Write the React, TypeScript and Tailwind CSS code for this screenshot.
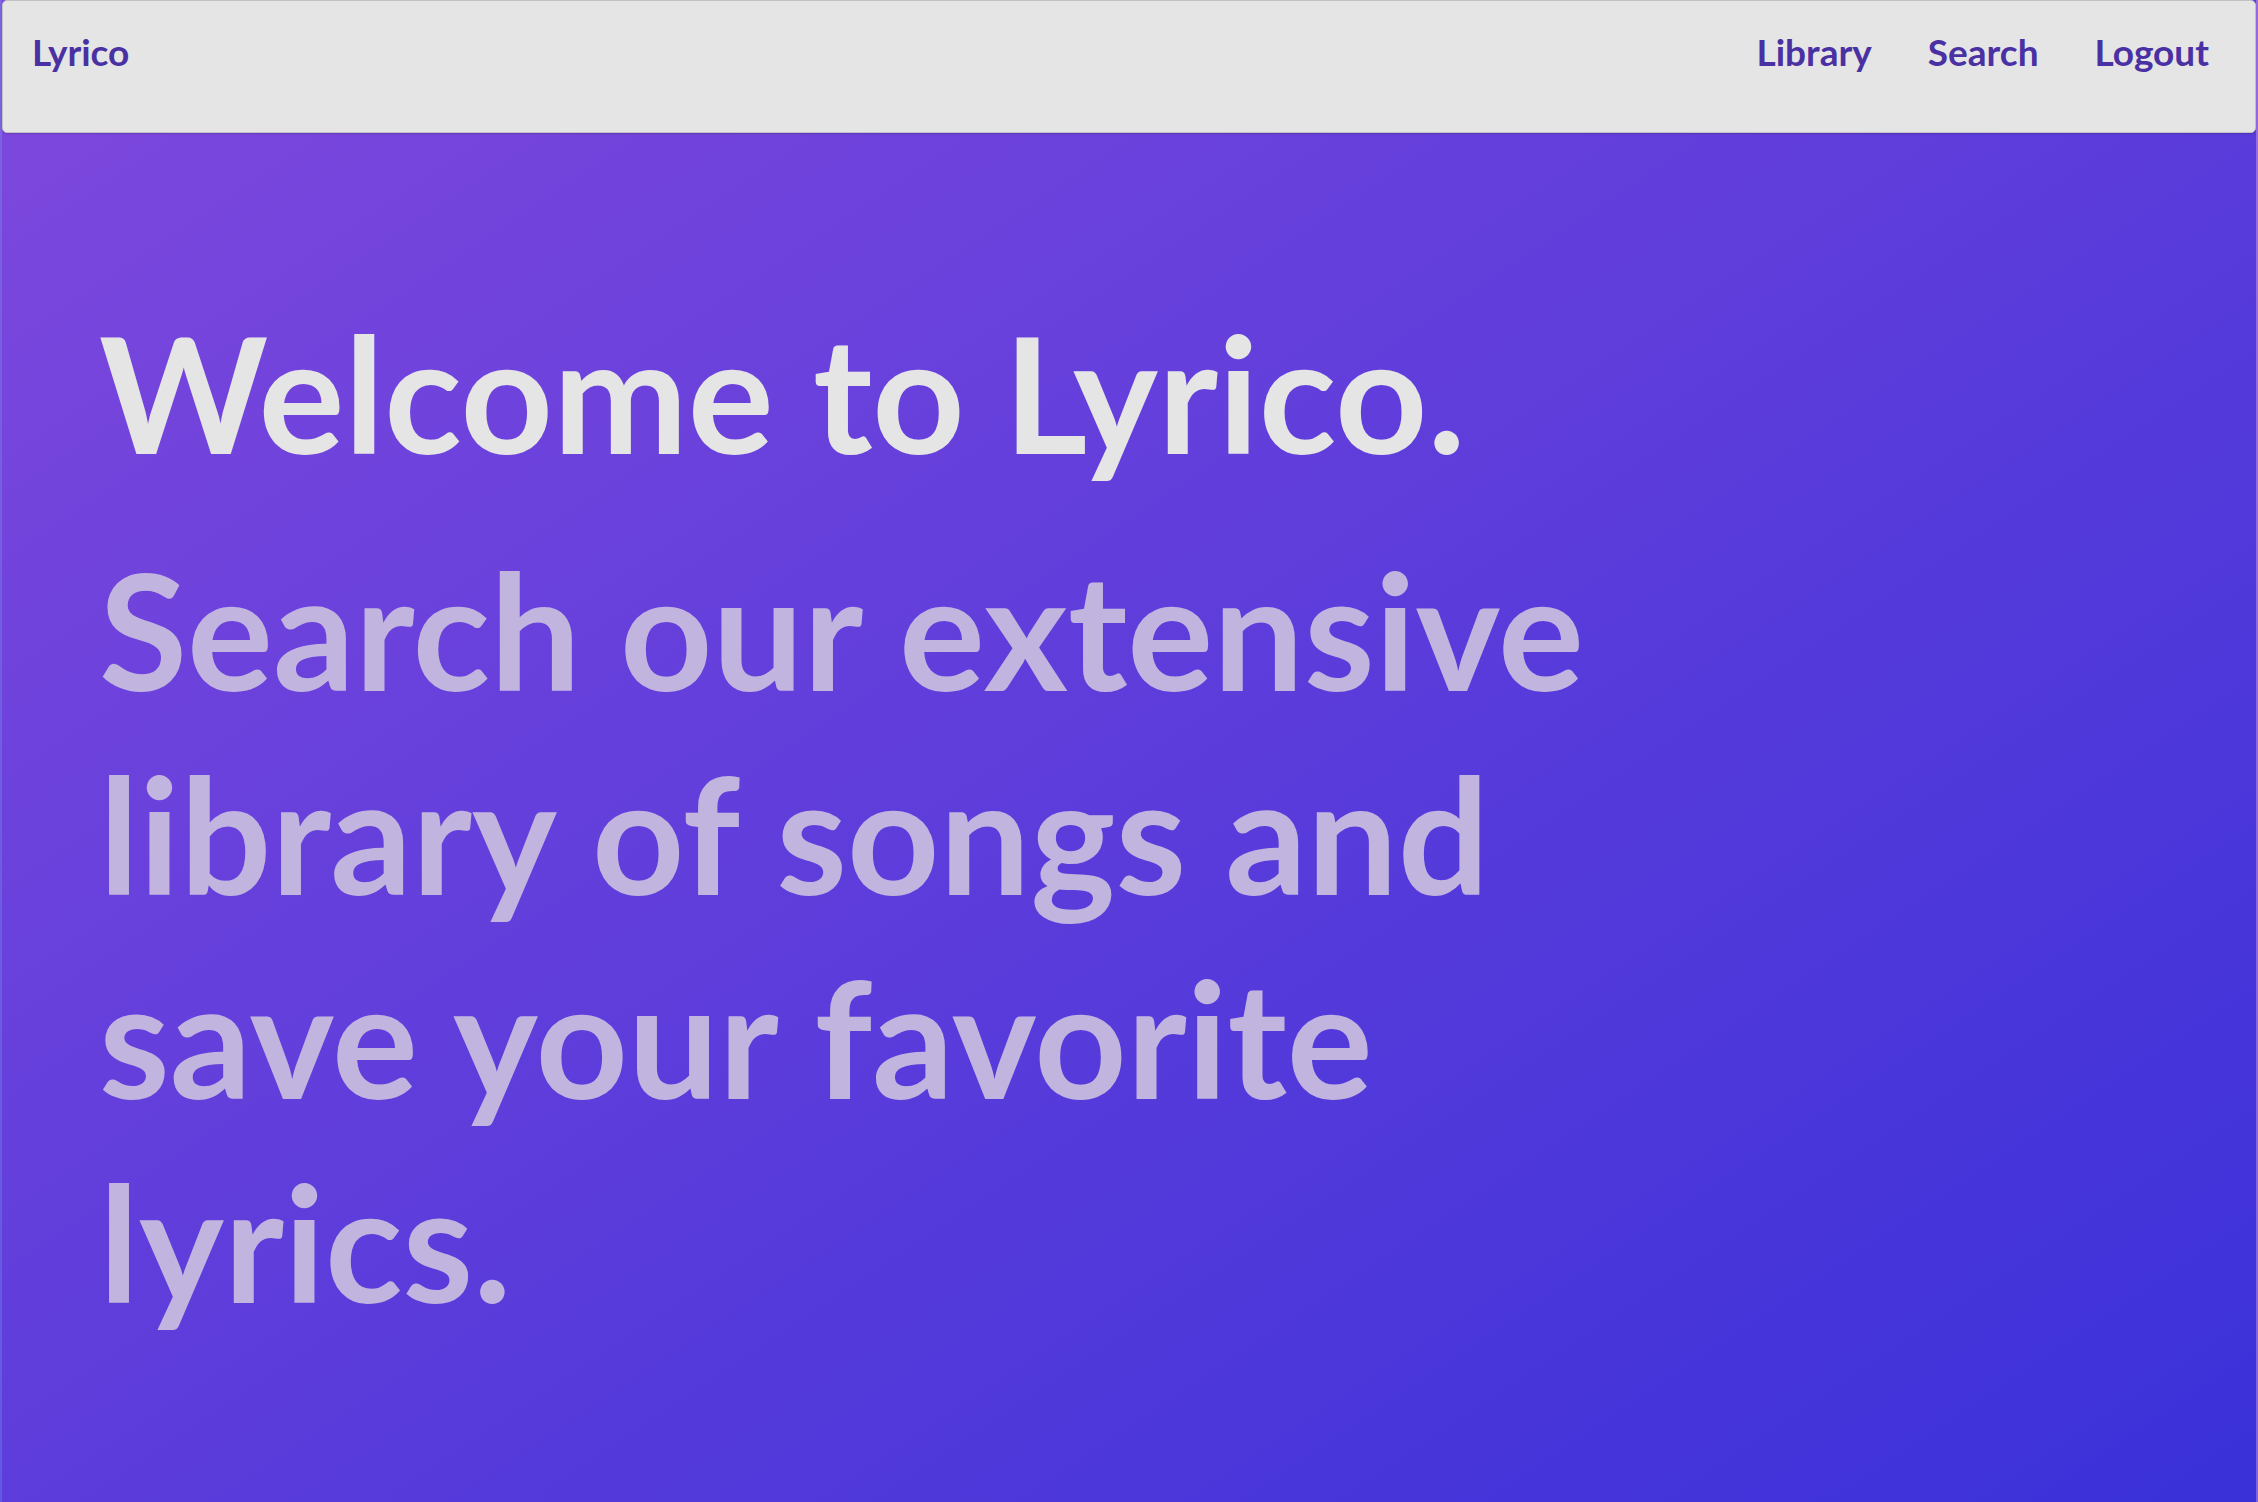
import React from "react";

export default function App() {
  return (
    <div
      className="min-h-[1502px] w-full bg-[linear-gradient(to_bottom_right,#7f48dd,#3a31d9)] border-x-2 border-white/20"
      style={{ fontFamily: "Lato, 'Open Sans', sans-serif" }}
    >
      <header className="h-[133px] bg-[#e5e5e5] border border-[#c2c2c2] rounded-[5px] shadow-[0_1px_2px_rgba(0,0,0,0.15)] flex items-start justify-between pt-[29px] pl-[29px] pr-[46px]">
        <a className="text-[37px] leading-[1.2] font-bold text-[#4a31a3]">Lyrico</a>
        <nav className="flex gap-[56px] text-[37px] leading-[1.2] font-bold text-[#4a31a3]">
          <a>Library</a>
          <a>Search</a>
          <a>Logout</a>
        </nav>
      </header>
      <main className="pl-[97px] pt-[157px] pr-[600px]">
        <h1 className="text-[161px] leading-[204px] font-bold text-[#e5e5e5]">Welcome to Lyrico.</h1>
        <p className="mt-[33px] max-w-[1600px] text-[161px] leading-[204px] font-bold text-[#c1b5e0]">
          Search our extensive library of songs and save your favorite lyrics.
        </p>
      </main>
    </div>
  );
}
